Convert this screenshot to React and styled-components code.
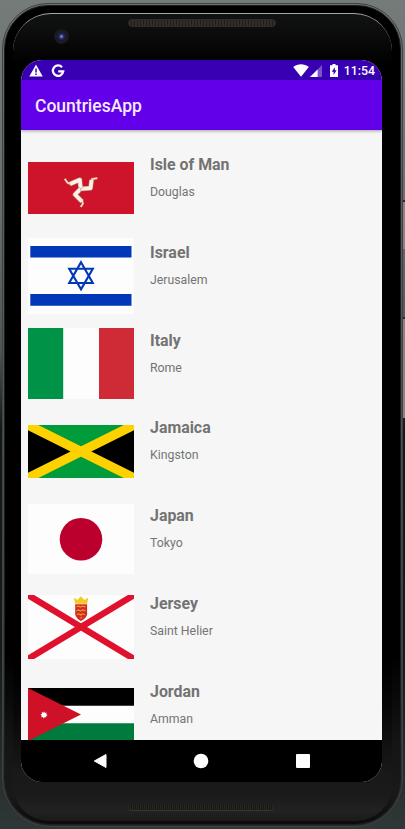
import React from "react";
import styled, { createGlobalStyle } from "styled-components";

const GlobalStyle = createGlobalStyle`
  * { box-sizing: border-box; }
  body { margin: 0; font-family: Roboto, sans-serif; overflow: hidden; }
`;

const Desk = styled.div`
  width: 405px;
  height: 829px;
  padding: 3px 2px 2px 2px;
  position: relative;
  overflow: hidden;
  background: linear-gradient(#747b79 0, #69706e 200px, #4d5655 350px, #141817 430px, #171c1b 660px, #2b3232 800px, #303737 829px);
`;

const SideKey = styled.div`
  position: absolute;
  right: 0;
  top: ${(p) => p.$top}px;
  width: 4px;
  height: ${(p) => p.$height}px;
  background: ${(p) => p.$color};
  border-top: 2px solid #302630;
`;

const Phone = styled.div`
  position: relative;
  height: 824px;
  width: 401px;
  padding: 1px;
  border-radius: 46px 46px 48px 48px;
  border: 1px solid #3f4342;
  background: linear-gradient(#6b706f 0, #555958 300px, #3c3d3d 680px, #272929 824px);
`;

const Rim = styled.div`
  height: 100%;
  padding: 7px 8px 3px 8px;
  border-radius: 44px 44px 46px 46px;
  background: linear-gradient(#000 0, #000 650px, #151515 740px, #191919 790px, #0a0a0a 820px);
  border: 1px solid #1d1e1e;
`;

const Glass = styled.div`
  height: 100%;
  padding-left: 8px;
  border-radius: 38px 38px 36px 36px;
  border-top: 1px solid #a4a8a6;
  background: linear-gradient(#111312 0, #0a0a0a 25px, #000 50px, #000 650px, #080808 700px, #191919 760px, #1a1a1a 781px, #222 797px, #171717 810px);
`;

const Forehead = styled.div`
  height: 46px;
  padding: 5px 0 0 107px;
  position: relative;
`;

const Speaker = styled.div`
  width: 148px;
  height: 8px;
  border-radius: 5px;
  border: 1px solid #332b27;
  background: repeating-linear-gradient(90deg, #322d2a 0 2px, #201d1b 2px 3px);
`;

const BottomSpeaker = styled.div`
  width: 145px;
  height: 7px;
  border-radius: 4px;
  border-bottom: 1px solid #3a3526;
  background: repeating-linear-gradient(90deg, #292721 0 1px, #171717 1px 2px);
`;

const Camera = styled.div`
  position: absolute;
  left: 33px;
  top: 15px;
  width: 15px;
  height: 15px;
  border-radius: 50%;
  background: radial-gradient(circle, #7377a9 0 1px, #2c3269 2px, #15193e 4px, #1b1d20 5px, #17191b 7px);
`;

const Screen = styled.div`
  width: 361px;
  height: 722px;
  display: flex;
  flex-direction: column;
  overflow: hidden;
  border-radius: 21px;
  background: #f6f6f6;
`;

const StatusBar = styled.div`
  height: 20px;
  flex: none;
  display: flex;
  align-items: center;
  padding: 1px 7px 0 8px;
  background: #3900b3;
  color: #fff;
  font-size: 12.3px;
  font-weight: 500;
  svg { display: block; }
`;

const Push = styled.div`flex: 1;`;
const Gap = styled.span`width: ${(p) => p.$w}px;`;

const Clock = styled.span`
  line-height: 20px;
`;

const AppBar = styled.header`
  height: 50px;
  flex: none;
  padding-left: 14px;
  line-height: 52px;
  font-size: 17.5px;
  font-weight: 500;
  color: #f7eaff;
  background: #6200ea;
  box-shadow: 0 1px 3px rgba(0, 0, 0, 0.35);
  z-index: 1;
`;

const List = styled.ul`
  list-style: none;
  margin: 0;
  padding: 14px 0 0 7px;
  flex: 1;
  min-height: 0;
  overflow: hidden;
`;

const Row = styled.li`
  height: 87.75px;
  display: grid;
  grid-template-columns: 106px 1fr;
  column-gap: 16px;
`;

const FlagCell = styled.div`
  display: flex;
  align-items: center;
  svg { display: block; width: 106px; }
`;

const Name = styled.div`
  margin-top: 11px;
  height: 20px;
  line-height: 20px;
  font-size: 15.9px;
  font-weight: 700;
  color: #737373;
`;

const Capital = styled.div`
  margin-top: 9px;
  line-height: 16px;
  font-size: 12.3px;
  color: #747474;
`;

const NavBar = styled.nav`
  height: 42px;
  flex: none;
  display: grid;
  grid-template-columns: 101px 101px 103px;
  justify-content: center;
  align-items: center;
  justify-items: center;
  background: #000;
  svg { display: block; }
`;

const Chin = styled.div`
  padding: 22px 0 0 107px;
`;

const WarningIcon = () => (
  <svg width="14" height="13" viewBox="0 0 14 13">
    <path d="M7 .6 13.7 12.4H.3Z" fill="#fff" />
    <path d="M6.3 4.6h1.5v4H6.3zm0 5h1.5v1.5H6.3z" fill="#3900b3" />
  </svg>
);

const GoogleIcon = () => (
  <svg width="14" height="14" viewBox="0 0 14 14">
    <path d="M11 3.2A5.2 5.2 0 1 0 12.2 7.4H7.2" fill="none" stroke="#fff" strokeWidth="2.3" />
  </svg>
);

const WifiIcon = () => (
  <svg width="16" height="13" viewBox="0 0 16 13">
    <path d="M.2 3C4.8-.6 11.2-.6 15.8 3L8 12.7Z" fill="#fff" />
  </svg>
);

const SignalIcon = () => (
  <svg width="12" height="12" viewBox="0 0 12 12">
    <path d="M12 0v12H0Z" fill="#7b53ce" />
    <path d="M7.6 4.4V12H0Z" fill="#fff" />
  </svg>
);

const BatteryIcon = () => (
  <svg width="8" height="13" viewBox="0 0 8 13">
    <path d="M2.5 0h3v1.3H8V13H0V1.3h2.5Z" fill="#fff" />
    <path d="M4.8 3.2 1.7 7.8h1.9v3.3l3-4.8H4.8Z" fill="#3900b3" />
  </svg>
);

const legs = "M52.7 26.8 51.8 17.8 42 22M52.7 26.8 62.5 26.2 63.6 18M52.7 26.8 47 32.5 54 39.5";
const feet = "M43 22.3 39.5 20.6 36.8 16.8M63.6 19.5 64 17.2 69.3 16.2M54 38.5 54.9 41.5 52.8 45";

const IsleOfMan = () => (
  <svg height="52.5" viewBox="0 0 106 52.5">
    <rect width="106" height="52.5" fill="#ce142b" />
    <g fill="none" strokeLinejoin="round">
      <path d={legs} stroke="#b9805c" strokeWidth="4.9" />
      <path d={feet} stroke="#d3a070" strokeWidth="2.3" />
      <path d={legs} stroke="#fdf1ea" strokeWidth="3.8" />
      <path d={feet} stroke="#f5dfce" strokeWidth="1.2" />
      <path d="M52.7 26.8 50 24.5M52.7 26.8 55.5 25M52.7 26.8v3.4" stroke="#b08a70" strokeWidth=".6" />
    </g>
  </svg>
);

const Israel = () => (
  <svg height="76" viewBox="0 0 106 76">
    <rect width="105.5" height="76" fill="#fdfdfd" />
    <path d="M2.3 8.1h101.2v11.3H2.3zm0 48h101.2v11.7H2.3z" fill="#0038b8" />
    <path d="M53 24.2 64.8 45H41.2ZM53 51.3 41.2 30.7h23.6Z" fill="none" stroke="#0038b8" strokeWidth="2.1" />
  </svg>
);

const Italy = () => (
  <svg height="71" viewBox="0 0 106 71">
    <rect width="106" height="71" fill="#fdfdfd" />
    <path d="M0 0h35.2v71H0z" fill="#009246" />
    <path d="M71 0h35v71H71z" fill="#ce2b37" />
  </svg>
);

const Jamaica = () => (
  <svg height="53" viewBox="0 0 106 53">
    <rect width="106" height="53" fill="#009b3a" />
    <path d="M0 0 53 26.5 0 53ZM106 0 53 26.5 106 53Z" fill="#000" />
    <path d="m0 0 106 53M0 53 106 0" stroke="#fed100" strokeWidth="9.2" />
  </svg>
);

const Japan = () => (
  <svg height="70" viewBox="0 0 106 70">
    <rect width="106" height="70" fill="#fdfdfd" />
    <circle cx="53" cy="35.3" r="21.3" fill="#bc002d" />
  </svg>
);

const Jersey = () => (
  <svg height="64" viewBox="0 0 106 64">
    <rect width="106" height="64" fill="#fdfdfd" />
    <path d="m0 0 106 64M0 64 106 0" stroke="#df112d" strokeWidth="6.3" />
    <path d="M45.8 2.5 49.4 5 52.8 1.3 56.5 5l3.8-2.5-1.2 6.3H47.2Z" fill="#f4c928" />
    <path d="M47.2 9.2h11.9v10.1Q58.4 23.4 53 26q-5-2.4-5.8-6.7Z" fill="#d22b22" />
    <path d="m48.5 11.8 2-.8 2 1.2 2-1.2 3 .9m-9 3.8 2-.8 2 1.2 2-1.2 3 .9m-8.7 3.8 2-.8 2 1.2 2-1.2 2 .9m-4.5 3h2" fill="none" stroke="#e9a334" strokeWidth="1.1" />
  </svg>
);

const Jordan = () => (
  <svg height="53" viewBox="0 0 106 53">
    <rect width="106" height="53" fill="#fdfdfd" />
    <path d="M0 0h106v17.7H0z" fill="#000" />
    <path d="M0 35.3h106V53H0z" fill="#007a3d" />
    <path d="M0 0 53 26.5 0 53Z" fill="#ce1126" />
    <path d="m16.1 23.3.8 1.6 1.7-.4-.4 1.7 1.5.9-1.6.8.2 1.7-1.6-.5-1 1.4-.8-1.5-1.7.2.5-1.6-1.3-1 1.5-.7-.1-1.8 1.7.6Z" fill="#fff" />
  </svg>
);

const countries = [
  { name: "Isle of Man", capital: "Douglas", Flag: IsleOfMan },
  { name: "Israel", capital: "Jerusalem", Flag: Israel },
  { name: "Italy", capital: "Rome", Flag: Italy },
  { name: "Jamaica", capital: "Kingston", Flag: Jamaica },
  { name: "Japan", capital: "Tokyo", Flag: Japan },
  { name: "Jersey", capital: "Saint Helier", Flag: Jersey },
  { name: "Jordan", capital: "Amman", Flag: Jordan },
];

export default function App() {
  return (
    <Desk>
      <GlobalStyle />
      <SideKey $top={200} $height={49} $color="#8d8281" />
      <SideKey $top={317} $height={101} $color="#8d8281" />
      <Phone>
        <Rim>
          <Glass>
            <Forehead>
              <Speaker />
              <Camera />
            </Forehead>
            <Screen>
              <StatusBar>
                <WarningIcon />
                <Gap $w={8} />
                <GoogleIcon />
                <Push />
                <WifiIcon />
                <Gap $w={1} />
                <SignalIcon />
                <Gap $w={8} />
                <BatteryIcon />
                <Gap $w={6} />
                <Clock>11:54</Clock>
              </StatusBar>
              <AppBar>CountriesApp</AppBar>
              <List>
                {countries.map(({ name, capital, Flag }) => (
                  <Row key={name}>
                    <FlagCell><Flag /></FlagCell>
                    <div>
                      <Name>{name}</Name>
                      <Capital>{capital}</Capital>
                    </div>
                  </Row>
                ))}
              </List>
              <NavBar>
                <svg width="14" height="16" viewBox="0 0 14 16">
                  <path d="M13 1.5v13L1.3 8Z" fill="#fff" stroke="#fff" strokeLinejoin="round" />
                </svg>
                <svg width="16" height="16" viewBox="0 0 16 16">
                  <circle cx="8" cy="8" r="7.3" fill="#fff" />
                </svg>
                <svg width="14" height="14" viewBox="0 0 14 14">
                  <rect width="14" height="14" rx="1" fill="#fff" />
                </svg>
              </NavBar>
            </Screen>
            <Chin>
              <BottomSpeaker />
            </Chin>
          </Glass>
        </Rim>
      </Phone>
    </Desk>
  );
}
